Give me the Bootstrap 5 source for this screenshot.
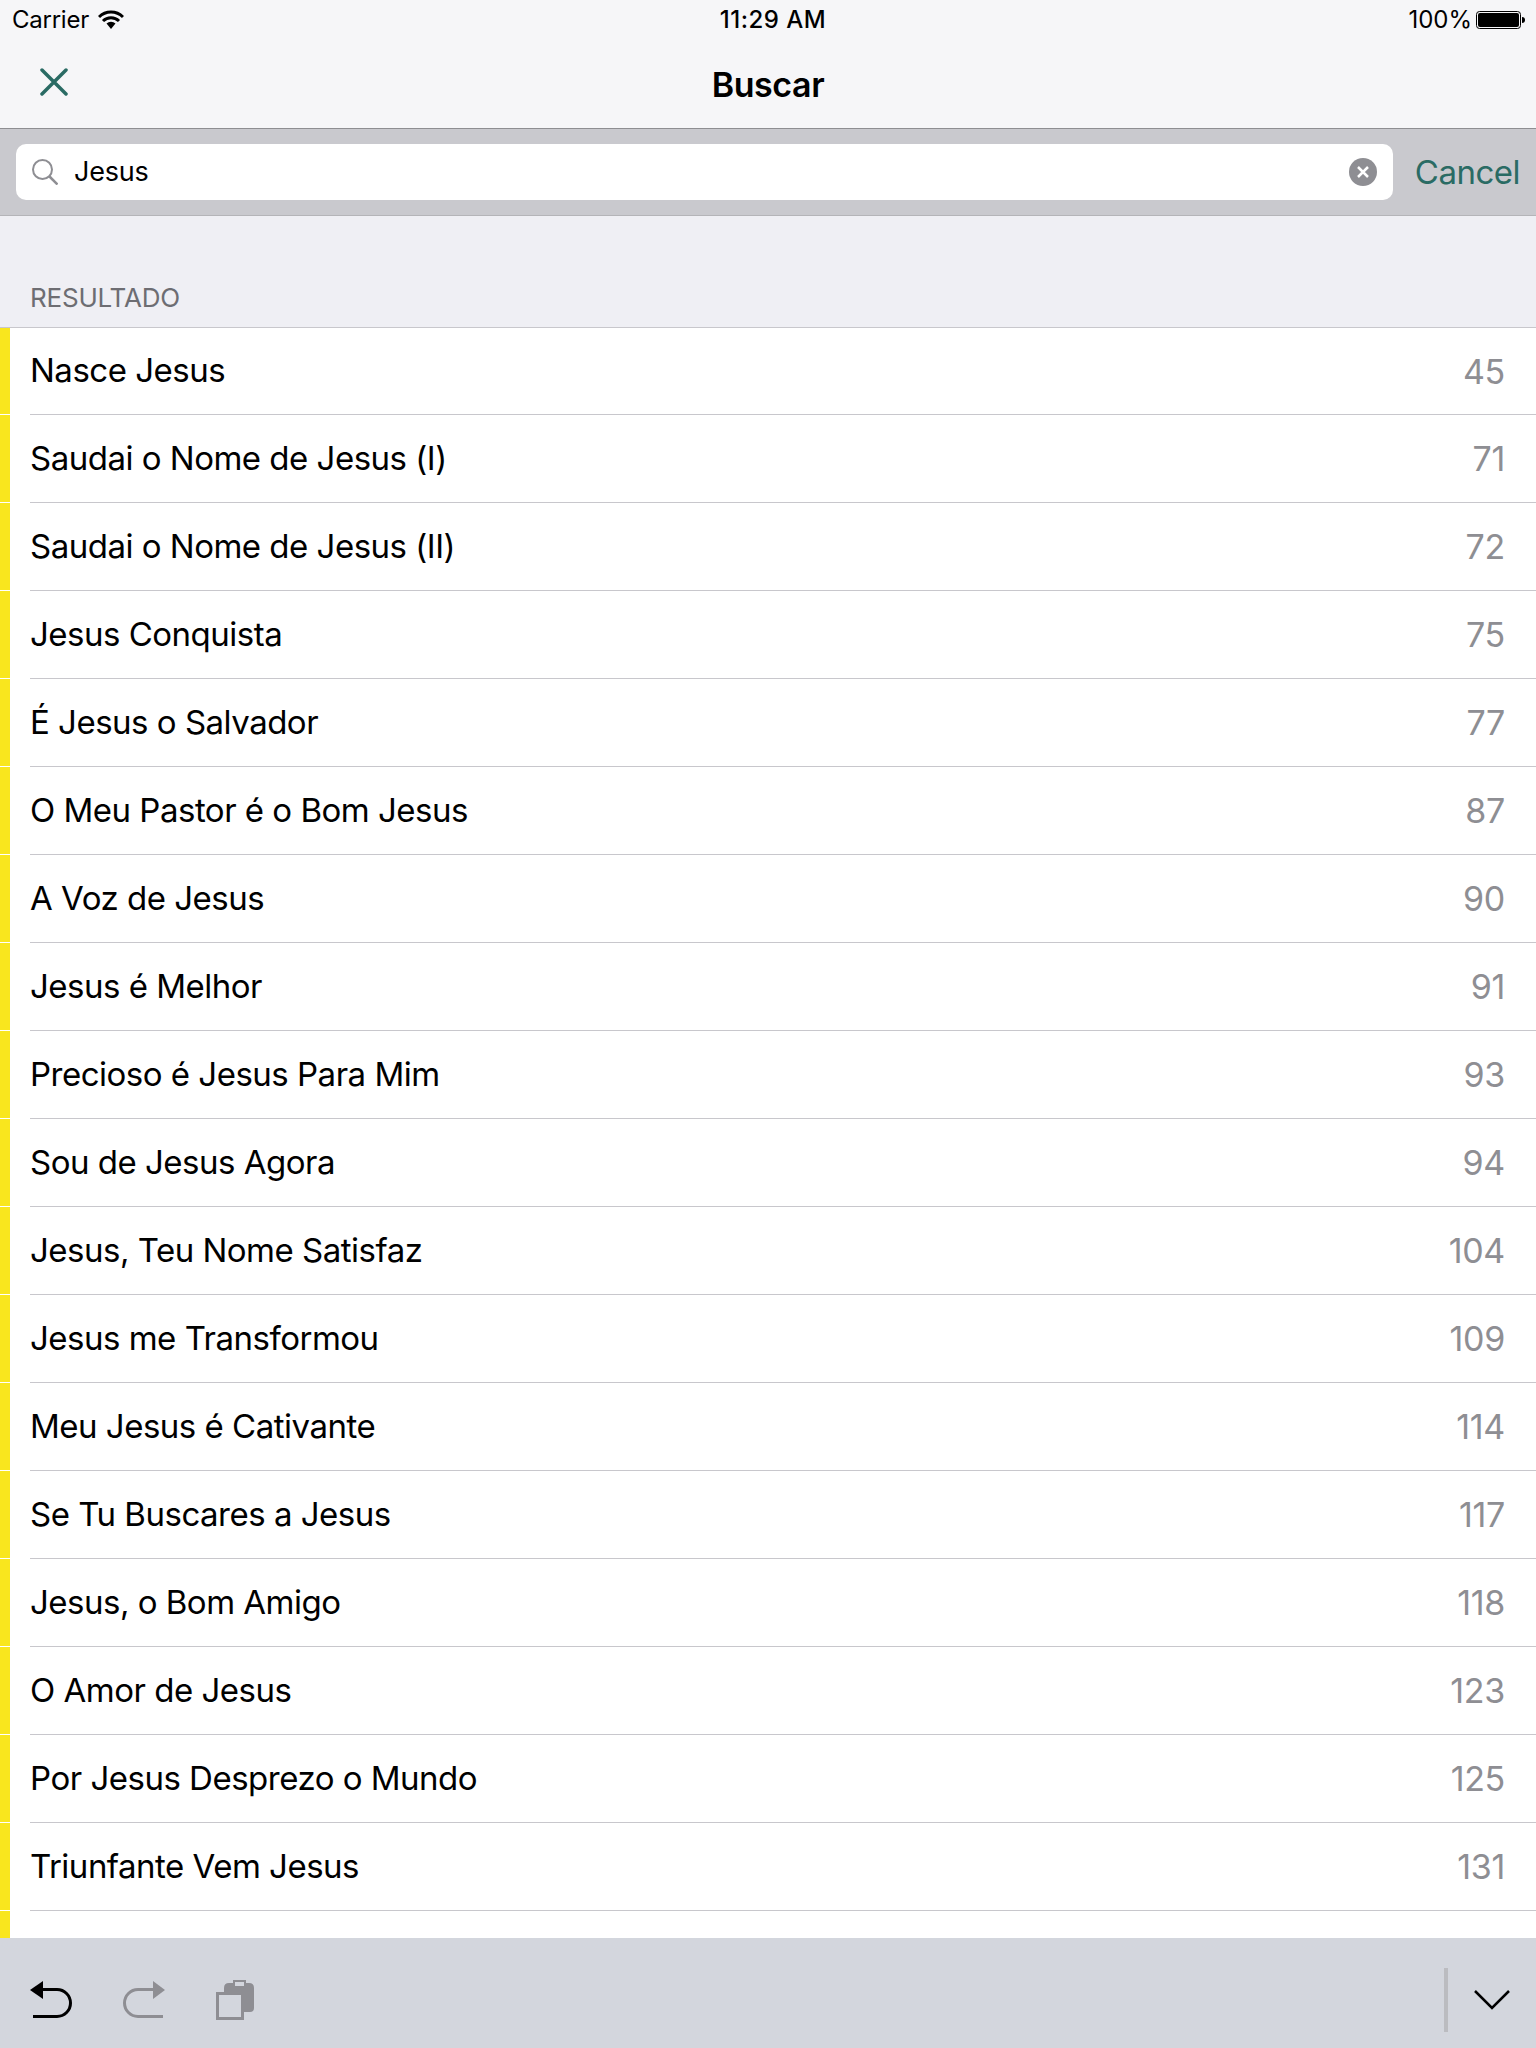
<!DOCTYPE html>
<html lang="en">
<head>
  <meta charset="UTF-8" />
  <meta name="viewport" content="width=device-width, initial-scale=1" />
  <title>Buscar</title>
  <link rel="stylesheet" href="https://cdn.jsdelivr.net/npm/bootstrap@5.3.0/dist/css/bootstrap.min.css" />
  <style>
    body {
      font-family: Inter, "Liberation Sans", sans-serif;
      background: #efeff4;
      color: #000;
    }
    .app-screen { height: 2048px; overflow: hidden; }

    /* Status + nav */
    .top-bar { background: #f6f6f8; height: 129px; border-bottom: 1px solid #8e8e92; }
    .status-row { height: 40px; padding: 0 10px 0 12px; font-size: 24px; line-height: 40px; }
    .status-side { width: 400px; }
    .status-left { gap: 9px; letter-spacing: -.25px; }
    .status-time { font-weight: 500; letter-spacing: .5px; margin-left: 8px; }
    .nav-row { height: 88px; }
    .nav-close { width: 108px; padding-left: 40px; margin-top: -5px; }
    .nav-spacer { width: 108px; }
    .nav-title { font-size: 34px; font-weight: 600; letter-spacing: -.4px; }

    /* Search */
    .search-bar { background: #c9c9ce; height: 87px; padding: 15px 16px; border-bottom: 1px solid #b4b4b8; }
    .search-field { background: #fff; height: 56px; border-radius: 10px; padding: 0 16px; }
    .search-text { font-size: 27px; margin-left: 16px; letter-spacing: -.2px; }
    .search-cancel { color: #2a6b64; font-size: 33px; margin-left: 22px; line-height: 56px; letter-spacing: -.5px; }

    /* Results */
    .section-title { height: 112px; padding: 0 30px 12px; color: #6d6d72; font-size: 26px; line-height: 34px; letter-spacing: -.2px; border-bottom: 1px solid #c8c7cc; }
    .result-list { background: #fff; min-height: 0; }
    .result-row { height: 88px; }
    .result-row:first-child { height: 87px; }
    .result-strip { width: 10px; background: #f9e61e; margin-bottom: 1px; }
    .result-body { margin-left: 20px; padding-right: 31px; border-bottom: 1px solid #c8c7cc; }
    .result-name { font-size: 33px; letter-spacing: -.5px; }
    .result-num { font-size: 34px; color: #8e8e93; letter-spacing: -.3px; }

    /* Keyboard toolbar */
    .key-bar { background: #d3d6dd; height: 110px; padding-top: 14px; }
    .key-left { padding-left: 30px; gap: 51px; }
    .key-divider { width: 4px; height: 64px; background: #bbbcc0; margin-right: 26px; }
    .key-chevron { margin-right: 26px; }
  </style>
</head>
<body>
  <div class="app-screen d-flex flex-column">

    <div class="top-bar flex-shrink-0">
      <div class="status-row d-flex justify-content-between align-items-center">
        <div class="status-side status-left d-flex align-items-center">
          <span>Carrier</span>
          <svg width="26" height="20" viewBox="0 0 26 20">
            <path d="M1 7a17 17 0 0 1 24 0M5 11a11.500 11.500 0 0 1 16 0" fill="none" stroke="#000" stroke-width="3"/>
            <path d="M8.500 13.500a6.500 6.500 0 0 1 9 0L13 19z" fill="#000"/>
          </svg>
        </div>
        <div class="status-time">11:29 AM</div>
        <div class="status-side d-flex align-items-center justify-content-end gap-1">
          <span>100%</span>
          <svg width="50" height="20" viewBox="0 0 50 20">
            <rect x=".5" y="1.500" width="44" height="17" rx="3" fill="none" stroke="#000"/>
            <rect x="2" y="3" width="41" height="14" rx="2" fill="#000"/>
            <path d="M46 7c2 0 3 1 3 3s-1 3-3 3z" fill="#000"/>
          </svg>
        </div>
      </div>
      <div class="nav-row d-flex align-items-center justify-content-between">
        <div class="nav-close">
          <svg class="d-block" width="28" height="28" viewBox="0 0 28 28">
            <path d="M2 2l24 24M26 2L2 26" fill="none" stroke="#2a6b64" stroke-width="3.500" stroke-linecap="round"/>
          </svg>
        </div>
        <div class="nav-title">Buscar</div>
        <div class="nav-spacer"></div>
      </div>
    </div>

    <div class="search-bar d-flex flex-shrink-0">
      <div class="search-field d-flex align-items-center flex-fill">
        <svg width="26" height="26" viewBox="0 0 26 26">
          <circle cx="10.500" cy="10.500" r="9.500" fill="none" stroke="#8e8e93" stroke-width="2"/>
          <path d="M17 17l8.500 8.500" stroke="#8e8e93" stroke-width="2.500"/>
        </svg>
        <span class="search-text flex-fill">Jesus</span>
        <svg width="28" height="28" viewBox="0 0 28 28">
          <circle cx="14" cy="14" r="14" fill="#8e8e93"/>
          <path d="M9 9l10 10M19 9L9 19" stroke="#fff" stroke-width="2.500"/>
        </svg>
      </div>
      <div class="search-cancel">Cancel</div>
    </div>

    <div class="section-title d-flex align-items-end flex-shrink-0">RESULTADO</div>

    <div class="result-list flex-fill overflow-hidden" id="resultList"></div>

    <div class="key-bar d-flex align-items-center justify-content-between flex-shrink-0">
      <div class="key-left d-flex align-items-center">
        <svg width="42" height="38" viewBox="0 0 42 38">
          <path d="M13 0v18L0 9z" fill="#000"/>
          <path d="M12 8.500h15a13.500 13.500 0 0 1 0 27H3" fill="none" stroke="#000" stroke-width="3"/>
        </svg>
        <svg width="42" height="38" viewBox="0 0 42 38">
          <path d="M30 0v18L42 9z" fill="#8e8e93"/>
          <path d="M31 8.500H15a13.500 13.500 0 0 0 0 27h25" fill="none" stroke="#8e8e93" stroke-width="3"/>
        </svg>
        <svg width="38" height="40" viewBox="0 0 38 40">
          <path d="M8 12V8q0-5 5-5h4V0h13v3h3q5 0 5 5v20q0 4-4 4h-6V12z" fill="#8e8e93"/>
          <rect x="19" y="2" width="9" height="4" fill="#d3d6dd"/>
          <rect x="1.500" y="13.500" width="25" height="25" fill="#d3d6dd" stroke="#8e8e93" stroke-width="3"/>
        </svg>
      </div>
      <div class="d-flex align-items-center">
        <div class="key-divider"></div>
        <svg class="key-chevron" width="36" height="20" viewBox="0 0 36 20">
          <path d="M1 1l17 17L35 1" fill="none" stroke="#000" stroke-width="2.500"/>
        </svg>
      </div>
    </div>
  </div>

  <script src="https://cdn.jsdelivr.net/npm/bootstrap@5.3.0/dist/js/bootstrap.bundle.min.js"></script>
  <script>
    const results = [
      ["Nasce Jesus", 45], ["Saudai o Nome de Jesus (I)", 71], ["Saudai o Nome de Jesus (II)", 72],
      ["Jesus Conquista", 75], ["É Jesus o Salvador", 77], ["O Meu Pastor é o Bom Jesus", 87],
      ["A Voz de Jesus", 90], ["Jesus é Melhor", 91], ["Precioso é Jesus Para Mim", 93],
      ["Sou de Jesus Agora", 94], ["Jesus, Teu Nome Satisfaz", 104], ["Jesus me Transformou", 109],
      ["Meu Jesus é Cativante", 114], ["Se Tu Buscares a Jesus", 117], ["Jesus, o Bom Amigo", 118],
      ["O Amor de Jesus", 123], ["Por Jesus Desprezo o Mundo", 125], ["Triunfante Vem Jesus", 131],
      ["", ""]
    ];
    document.getElementById("resultList").innerHTML = results.map(r => `
      <div class="result-row d-flex">
        <div class="result-strip flex-shrink-0"></div>
        <div class="result-body d-flex justify-content-between align-items-center flex-fill">
          <span class="result-name">${r[0]}</span>
          <span class="result-num">${r[1]}</span>
        </div>
      </div>`).join("");
  </script>
</body>
</html>
